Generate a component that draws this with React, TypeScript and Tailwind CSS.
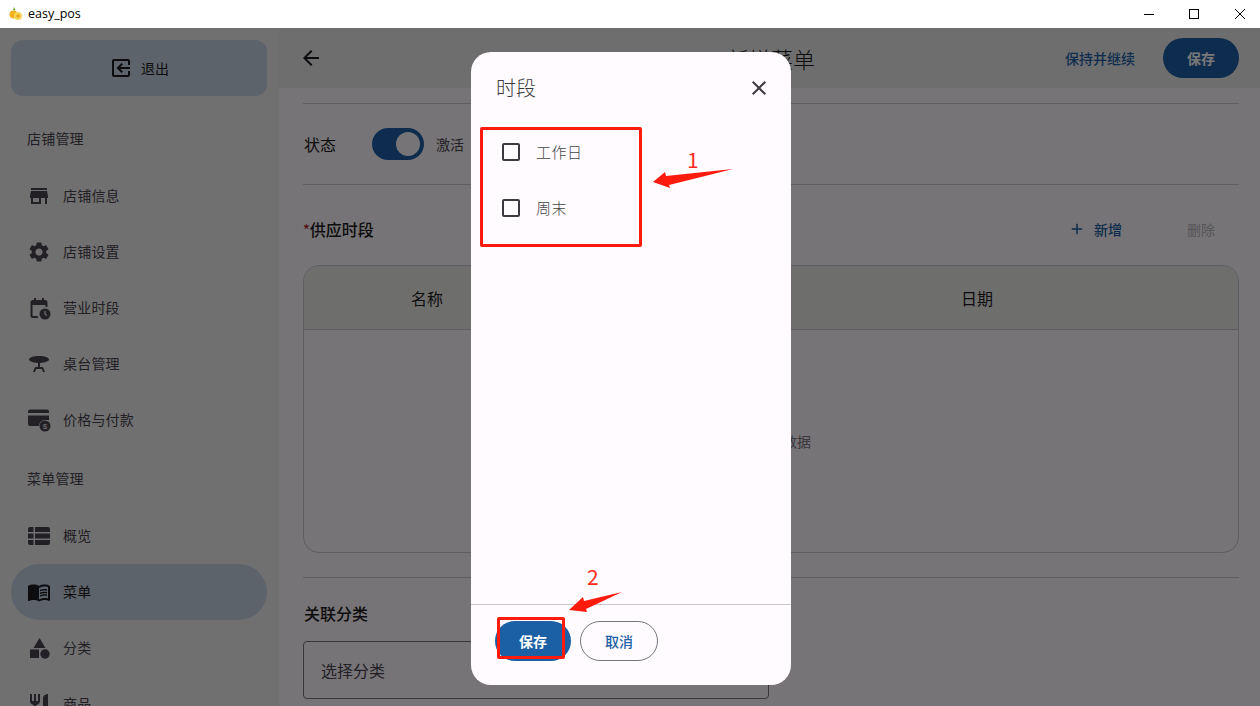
import React from 'react';
import {
  MdAdd,
  MdArrowBack,
  MdClose,
  MdMenuBook,
  MdOutlineExitToApp,
  MdRestaurant,
  MdSettings,
  MdStore,
  MdTableBar,
} from 'react-icons/md';

const font = { fontFamily: '"Noto Sans CJK SC", "Noto Sans", sans-serif' };

function CalendarClock({ className }: { className?: string }) {
  return (
    <svg viewBox="0 0 24 24" fill="currentColor" className={className}>
      <path d="M7 2v2H6a2.500 2.500 0 0 0-2.500 2.500V20A2 2 0 0 0 5.500 22H11v-2H5.500V9h13v2h2V6.500A2.500 2.500 0 0 0 18 4h-1V2h-2v2H9V2z" />
      <circle cx="18" cy="18" r="5.500" />
      <path d="M18 15v3.200l2 1.300" fill="none" stroke="#e6e6e6" strokeWidth="1.300" />
    </svg>
  );
}

function PriceCard({ className }: { className?: string }) {
  return (
    <svg viewBox="0 0 24 24" fill="currentColor" className={className}>
      <path d="M3 1.500h17a2 2 0 0 1 2 2V12h-4a6 6 0 0 0-6 6H3a2 2 0 0 1-2-2V3.500a2 2 0 0 1 2-2z" />
      <rect x="1" y="5" width="21" height="2.500" fill="#ededed" />
      <circle cx="18" cy="18" r="5.500" />
      <text x="18" y="21" textAnchor="middle" fontSize="8" fill="#ededed" fontFamily="Liberation Sans, sans-serif">
        $
      </text>
    </svg>
  );
}

function Shapes({ className }: { className?: string }) {
  return (
    <svg viewBox="0 0 24 24" fill="currentColor" className={className}>
      <path d="M12.500 2l6 10h-12z" />
      <rect x="3" y="13.500" width="9" height="8.500" />
      <circle cx="18" cy="18" r="4.700" />
    </svg>
  );
}

// 概览：三行列表，比 MdViewList 更宽一点
function Rows({ className }: { className?: string }) {
  return (
    <svg viewBox="0 0 24 24" fill="currentColor" className={className}>
      <path d="M3 3h3.500v5H1V5a2 2 0 0 1 2-2zM8 3h13a2 2 0 0 1 2 2v3H8zM1 9.500h5.500v5H1zM8 9.500h15v5H8zM1 16h5.500v5H3a2 2 0 0 1-2-2zM8 16h15v3a2 2 0 0 1-2 2H8z" />
    </svg>
  );
}

function WindowIcon() {
  return (
    <svg viewBox="0 0 14 14" className="h-[14px] w-[14px]">
      <path d="M5 0l1.500 3L4 3.500z" fill="#6aa82a" />
      <circle cx="4.500" cy="7.500" r="4" fill="#f3b21c" />
      <circle cx="9" cy="9" r="4" fill="#f8d55c" />
      <circle cx="9" cy="9" r="1.800" fill="#e9a417" />
    </svg>
  );
}

function NavItem({
  icon,
  label,
  active,
}: {
  icon: React.ReactNode;
  label: string;
  active?: boolean;
}) {
  return (
    <div
      className={`flex h-14 items-center gap-3 rounded-full pl-4 text-sm tracking-[0.2px] ${
        active ? 'bg-[#c4d3e4] text-[#1d1b20]' : 'text-[#49454f]'
      }`}
    >
      {icon}
      <span className="pb-[2px]">{label}</span>
    </div>
  );
}

function SectionLabel({ children }: { children: React.ReactNode }) {
  return <div className="flex h-[60px] items-center pl-4 text-sm tracking-[0.2px] text-[#49454f]">{children}</div>;
}

function Sidebar() {
  const iconClass = 'h-6 w-6 shrink-0';
  return (
    <aside className="h-full w-[279px] shrink-0 overflow-hidden bg-[#ededed] pt-3 pr-3 pl-[11px]">
      <div className="flex h-14 items-center justify-center gap-2 rounded-xl bg-[#c4d3e4] text-sm text-[#1d1b20]">
        <MdOutlineExitToApp className="h-6 w-6 -scale-x-100" />
        <span>退出</span>
      </div>
      <div className="mt-3">
        <SectionLabel>店铺管理</SectionLabel>
        <NavItem icon={<MdStore className={iconClass} />} label="店铺信息" />
        <NavItem icon={<MdSettings className={iconClass} />} label="店铺设置" />
        <NavItem icon={<CalendarClock className={iconClass} />} label="营业时段" />
        <NavItem icon={<MdTableBar className={iconClass} />} label="桌台管理" />
        <NavItem icon={<PriceCard className={iconClass} />} label="价格与付款" />
        <SectionLabel>菜单管理</SectionLabel>
        <NavItem icon={<Rows className={iconClass} />} label="概览" />
        <NavItem active icon={<MdMenuBook className={iconClass} />} label="菜单" />
        <NavItem icon={<Shapes className={iconClass} />} label="分类" />
        <NavItem icon={<MdRestaurant className={iconClass} />} label="商品" />
      </div>
    </aside>
  );
}

function Main() {
  return (
    <main className="relative h-full min-w-0 flex-1 overflow-hidden bg-[#fbf7fb]">
      <header className="flex h-[60px] items-center bg-[#eaeaea] pr-[21px] pl-5">
        <MdArrowBack className="h-6 w-6 text-[#1d1b20]" />
        <div className="flex-1 pl-[154px] text-center text-[22px] font-light text-[#1d1b20]">新增菜单</div>
        <span className="mr-7 text-sm font-medium text-[#1e60a6]">保持并继续</span>
        <button className="h-10 w-[76px] rounded-full bg-[#1e60a6] text-sm font-bold text-white">保存</button>
      </header>
      <div className="pt-[15px] pr-[21px] pl-6">
        <div className="flex h-[82px] items-center border-y border-[#cac4d0] text-[#1d1b20]">
          <span className="w-[69px] pl-px text-base">状态</span>
          <span className="flex h-8 w-[52px] items-center justify-end rounded-full bg-[#1e60a6] pr-1">
            <span className="h-6 w-6 rounded-full bg-[#fbf7fb]" />
          </span>
          <span className="ml-3 text-sm text-[#49454f]">激活</span>
        </div>
        <div className="mt-[25px] flex h-10 items-center pb-[2px] font-medium text-[#1d1b20]">
          <span className="text-sm text-[#b3261e]">*</span>
          <span className="text-base">供应时段</span>
          <MdAdd className="ml-auto h-[18px] w-[18px] text-[#1e60a6]" />
          <span className="ml-2 text-sm text-[#1e60a6]">新增</span>
          <span className="mr-6 ml-[65px] text-sm font-normal text-[#b8b5bb]">删除</span>
        </div>
        <div className="mt-[15px] h-[288px] overflow-hidden rounded-2xl border border-[#cac4d0]">
          <div className="grid h-16 grid-cols-[246px_166px_1fr] items-center border-b border-[#cac4d0] bg-[#eaeae8] text-center text-base text-[#1d1b20]">
            <span>名称</span>
            <span />
            <span>日期</span>
          </div>
          <div className="flex h-[222px] items-center justify-center pl-6 text-sm text-[#79747e]">暂无数据</div>
        </div>
        <div className="mt-6 h-px bg-[#cac4d0]" />
        <div className="mt-[23px] pl-px text-base font-medium text-[#1d1b20]">关联分类</div>
        <div className="mt-4 flex h-[58px] w-[466px] items-center rounded border border-[#79747e] pl-[17px] text-base text-[#49454f]">
          选择分类
        </div>
      </div>
      <div className="absolute top-[267px] right-[7px] h-[65px] w-px bg-[#fffbff]/10" />
    </main>
  );
}

function PeriodDialog() {
  return (
    <div className="flex h-[633px] w-[320px] flex-col overflow-hidden rounded-[20px] bg-[#fffbff]">
      <div className="flex h-[72px] items-center justify-between pr-5 pl-[25px]">
        <span className="text-xl font-light text-[#3c3a40]">时段</span>
        <MdClose className="h-6 w-6 text-[#3c3a40]" />
      </div>
      <div className="flex-1 pl-[31px] text-[15px] tracking-[0.5px] text-[#444444]">
        {['工作日', '周末'].map((day) => (
          <label key={day} className="flex h-14 items-center gap-4">
            <span className="h-[18px] w-[18px] rounded-[2px] border-2 border-[#3c3a40]" />
            <span className="font-light">{day}</span>
          </label>
        ))}
      </div>
      <div className="flex h-[81px] gap-[9px] border-t border-[#cac4d0] pt-4 pl-6">
        <button className="h-10 w-[76px] rounded-full bg-[#1b5fa5] text-sm font-bold text-white">保存</button>
        <button className="h-10 w-[78px] rounded-full border border-[#79747e] text-sm font-medium text-[#1b5fa5]">
          取消
        </button>
      </div>
    </div>
  );
}

// 标注层：红框、箭头、序号都压在对话框上面
function Annotations() {
  return (
    <>
      <div className="absolute top-[127px] left-[480px] h-[120px] w-[162px] rounded-[2px] border-[3px] border-[#ff1a0e]" />
      <div className="absolute top-[617px] left-[497px] h-[42px] w-[68px] rounded-[2px] border-[3px] border-[#ff1a0e]" />
      <svg viewBox="0 0 1260 706" className="absolute top-0 left-0 h-[706px] w-[1260px]">
        <path d="M653 182l12-10 1 4 67-7-64 16 1 3z" fill="#ff1a0e" />
        <path d="M569 610l14-13 1 4 38-9-36 17 1 3z" fill="#ff1a0e" />
      </svg>
      <span className="absolute top-[147px] left-[687px] text-[21px] leading-6 text-[#ff2a1a]">1</span>
      <span className="absolute top-[564px] left-[587px] text-[21px] leading-6 text-[#ff2a1a]">2</span>
    </>
  );
}

export default function App() {
  return (
    <div className="relative h-[706px] w-[1260px] overflow-hidden bg-white" style={font}>
      <div className="flex h-7 items-center bg-white pl-[9px] text-[12.5px] text-black">
        <WindowIcon />
        <span className="ml-[5px]" style={{ fontFamily: '"Open Sans", sans-serif' }}>
          easy_pos
        </span>
        <div className="ml-auto flex items-center">
          <span className="mr-[35px] h-px w-[10px] bg-black" />
          <span className="mr-[36px] h-[10px] w-[10px] border border-black" />
          <svg viewBox="0 0 10 10" className="mr-[15px] h-[10px] w-[10px]">
            <path d="M0 0l10 10M10 0L0 10" stroke="black" strokeWidth="1" />
          </svg>
        </div>
      </div>
      <div className="relative flex h-[678px]">
        <Sidebar />
        <Main />
        <div className="absolute inset-0 flex justify-center bg-black/[.53] pt-6 pl-[2px]">
          <PeriodDialog />
        </div>
      </div>
      <Annotations />
    </div>
  );
}
